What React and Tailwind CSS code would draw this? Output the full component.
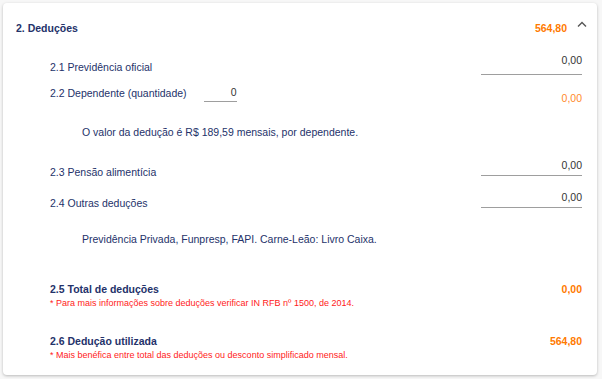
import React, { useState } from 'react';

const navy = 'text-[#24326a]';

function Field({ value, className = '' }) {
  return (
    <div className={`w-[101px] leading-[14px] pb-[3px] border-b border-[#9e9e9e] text-right text-[10.5px] text-[#333] ${className}`}>
      {value}
    </div>
  );
}

export default function App() {
  const [open, setOpen] = useState(true);

  return (
    <div className="w-[602px] h-[379px] bg-[#f7f7f7] pt-[3px] px-[3px]" style={{ fontFamily: '"Liberation Sans", Arial, sans-serif' }}>
      <div className="w-[594px] h-[372px] bg-white rounded-[4px] shadow-[0_1px_3px_rgba(0,0,0,0.25)]">
        {/* Header */}
        <div className="h-[48px] pt-[3px] flex items-center pl-[13px] pr-[8px]">
          <span className={`text-[10.5px] font-bold ${navy}`}>2. Deduções</span>
          <span className="ml-auto text-[10.5px] font-bold text-[#ff7a00]">564,80</span>
          <button onClick={() => setOpen(!open)} className="ml-[8px] w-[14px] h-[14px] flex items-center justify-center text-[#555] -mt-[9px]">
            <svg width="10" height="6" viewBox="0 0 10 6" fill="none" stroke="currentColor" strokeWidth="1.4">
              <path d="M1 5.5 L5 1.5 L9 5.5" />
            </svg>
          </button>
        </div>

        <div className={`pl-[47px] pr-[15px] text-[10.5px] ${navy}`}>
          {/* 2.1 */}
          <div className="h-[24px] flex justify-between">
            <span className="mt-[9px] leading-[14px]">2.1 Previdência oficial</span>
            <Field value="0,00" className="mt-[2px]" />
          </div>

          {/* 2.2 */}
          <div className="h-[31px] flex">
            <span className="mt-[11px] leading-[14px]">2.2 Dependente (quantidade)</span>
            <div className="ml-[17px] mt-[10px] w-[33px] h-[17px] leading-[14px] pb-[2px] border-b border-[#9e9e9e] text-right text-[10.5px] text-[#333]">0</div>
            <span className="ml-auto mt-[16px] leading-[14px] text-[#ff8a2a]">0,00</span>
          </div>

          <p className="mt-[19px] pl-[32px] leading-[14px]">O valor da dedução é R$ 189,59 mensais, por dependente.</p>

          {/* 2.3 */}
          <div className="h-[40px] flex justify-between">
            <span className="mt-[26px] leading-[14px]">2.3 Pensão alimentícia</span>
            <Field value="0,00" className="mt-[19px] h-[18px]" />
          </div>

          {/* 2.4 */}
          <div className="h-[31px] flex justify-between">
            <span className="mt-[17px] leading-[14px]">2.4 Outras deduções</span>
            <Field value="0,00" className="mt-[11px] h-[18px]" />
          </div>

          <p className="mt-[22px] pl-[32px] leading-[14px]">Previdência Privada, Funpresp, FAPI. Carne-Leão: Livro Caixa.</p>

          {/* 2.5 */}
          <div className="mt-[36px] flex justify-between leading-[14px] font-bold">
            <span>2.5 Total de deduções</span>
            <span className="text-[#ff7a00]">0,00</span>
          </div>
          <p className="mt-[1px] leading-[12px] text-[9px] text-[#ff1a1a]">* Para mais informações sobre deduções verificar IN RFB nº 1500, de 2014.</p>

          {/* 2.6 */}
          <div className="mt-[25px] flex justify-between leading-[14px] font-bold">
            <span>2.6 Dedução utilizada</span>
            <span className="text-[#ff7a00]">564,80</span>
          </div>
          <p className="mt-[1px] leading-[12px] text-[9px] text-[#ff1a1a]">* Mais benéfica entre total das deduções ou desconto simplificado mensal.</p>
        </div>
      </div>
    </div>
  );
}
